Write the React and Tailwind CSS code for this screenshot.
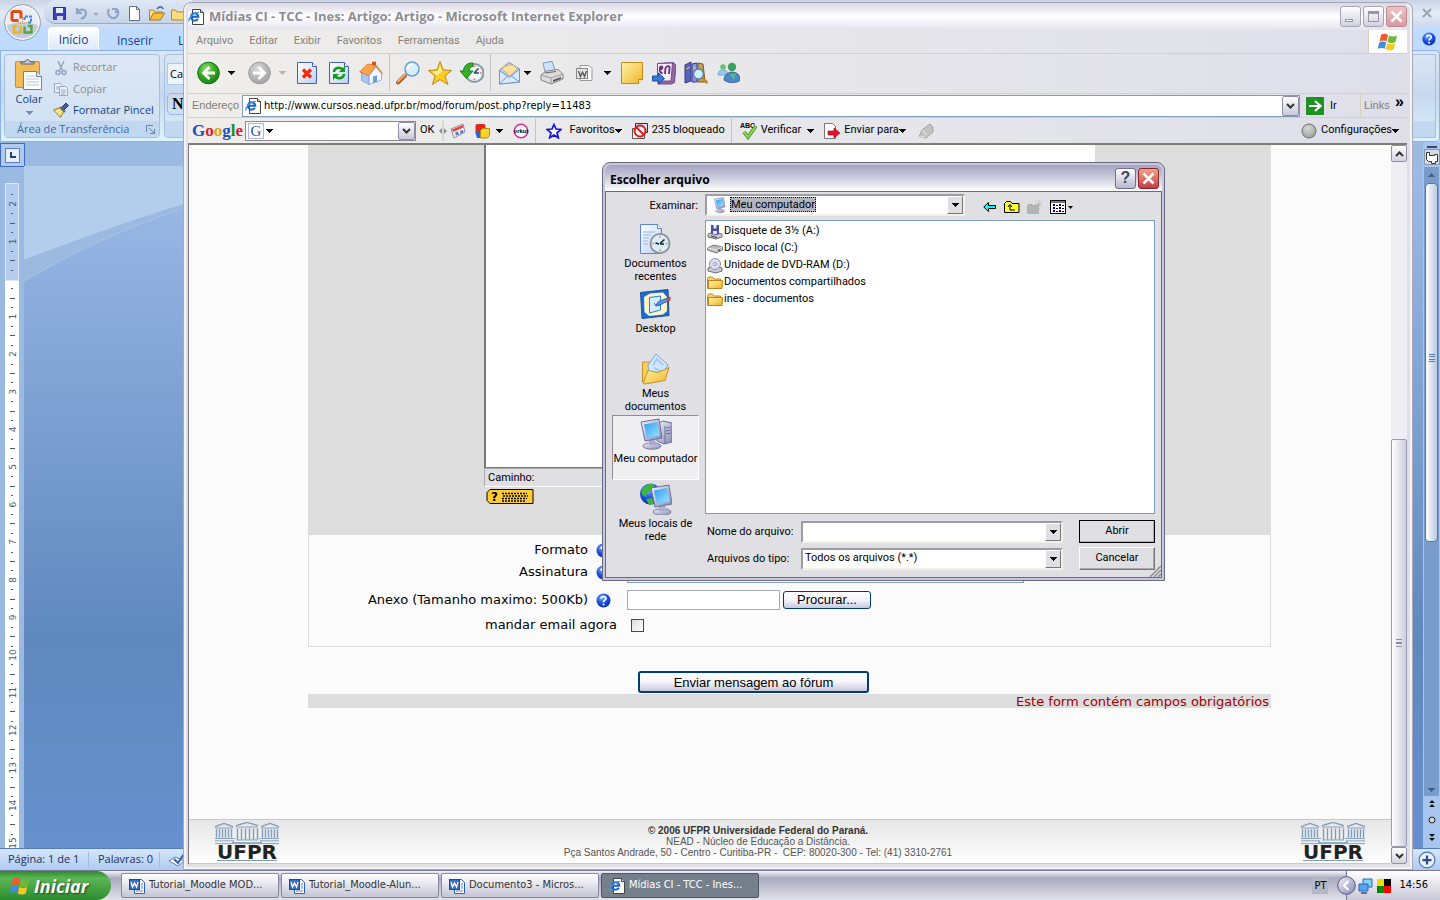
import React from 'react';

/* ---------- shared glyphs ---------- */

const Caret = ({ className = 'fill-black' }) => (
  <svg width="7" height="4" viewBox="0 0 7 4" className={`shrink-0 ${className}`} shapeRendering="crispEdges">
    <path d="M0 0h7v1H6v1H5v1H4v1H3V3H2V2H1V1H0z" />
  </svg>
);

const Defs = () => (
  <svg width="0" height="0" className="absolute" aria-hidden="true">
    <defs>
      <radialGradient id="green" cx="0.4" cy="0.3" r="0.8">
        <stop offset="0" stopColor="#8fe060" />
        <stop offset="0.5" stopColor="#35a924" />
        <stop offset="1" stopColor="#127a10" />
      </radialGradient>
      <radialGradient id="gray" cx="0.4" cy="0.3" r="0.8">
        <stop offset="0" stopColor="#d8d8d8" />
        <stop offset="1" stopColor="#9b9b9b" />
      </radialGradient>
      <radialGradient id="blue" cx="0.4" cy="0.3" r="0.8">
        <stop offset="0" stopColor="#7fb2ff" />
        <stop offset="0.5" stopColor="#1c50e0" />
        <stop offset="1" stopColor="#0526a0" />
      </radialGradient>
      <linearGradient id="paper" x1="0" y1="0" x2="1" y2="1">
        <stop offset="0" stopColor="#ffffff" />
        <stop offset="1" stopColor="#b9d0f5" />
      </linearGradient>
      <linearGradient id="gold" x1="0" y1="0" x2="1" y2="1">
        <stop offset="0" stopColor="#fff4a8" />
        <stop offset="1" stopColor="#f0b428" />
      </linearGradient>
      <linearGradient id="screen" x1="0" y1="0" x2="1" y2="1">
        <stop offset="0" stopColor="#2f9df0" />
        <stop offset="1" stopColor="#9be6ff" />
      </linearGradient>
      <linearGradient id="steel" x1="0" y1="0" x2="1" y2="1">
        <stop offset="0" stopColor="#f2f2fa" />
        <stop offset="1" stopColor="#8688b4" />
      </linearGradient>
    </defs>
  </svg>
);

const Flag = ({ size = 20 }) => (
  <svg width={size} height={size} viewBox="0 0 20 20">
    <path d="M3 3c3-2 5-1 7 0L8.500 9.500C6.500 8 4.500 8 1.500 9.500z" fill="#ef5a2b" />
    <path d="M11 3.500c2 1 5 1.500 8 0L17.500 10c-3 1.500-6 1-8 0z" fill="#6fb93a" />
    <path d="M1.200 10.500c3-1.500 5-1.500 7 0L6.700 17c-2-1.500-4-1.500-7 0z" fill="#3f8fe0" />
    <path d="M9.200 11c2 1 5 1.500 8 0l-1.500 6.500c-3 1.500-6 1-8 0z" fill="#fbc523" />
  </svg>
);

const IePage = ({ size = 16 }) => (
  <svg width={size} height={size} viewBox="0 0 16 16" className="shrink-0">
    <path d="M4.500.5h8l3 3v12h-11z" fill="#fffef2" stroke="#444" />
    <path d="M12.500.5v3h3" fill="#ddd" stroke="#444" />
    <path d="M9.800 9.800A3.700 3.700 0 1 1 10.300 7.800H4" fill="none" stroke="#1b62cf" strokeWidth="2" />
    <path d="M.8 12.500C0 9 6 3 11 3.500" fill="none" stroke="#3d9be8" strokeWidth="1.200" />
  </svg>
);

const WordPage = () => (
  <svg width="16" height="16" viewBox="0 0 16 16" className="shrink-0">
    <path d="M5.500 1.500h7l3 3v11h-10z" fill="#fff" stroke="#2f5fa8" />
    <path d="M12 6h2M12 8h2M12 10h2M7 13h7" stroke="#5b84c4" />
    <rect x=".5" y="1.500" width="10" height="10" fill="#3a6fc4" stroke="#1f4a94" />
    <path d="M2 4l1.500 5L5.500 5l2 4L9 4" fill="none" stroke="#fff" strokeWidth="1.300" />
  </svg>
);

const Folder = () => (
  <svg width="16" height="16" viewBox="0 0 16 16" className="shrink-0">
    <path d="M.5 3.500l1-1.500h4l1.500 2h6.500v9.500H.5z" fill="#f5d468" stroke="#c08a18" />
    <path d="M1.500 5.500h14l-.5 8H1.500z" fill="url(#gold)" stroke="#b8861a" />
  </svg>
);

const HelpBall = ({ size = 15 }) => (
  <svg width={size} height={size} viewBox="0 0 15 15" className="shrink-0">
    <circle cx="7.500" cy="7.500" r="7" fill="url(#blue)" />
    <path d="M5 5.700C5 2.800 10.200 2.800 10 5.700 9.900 7.200 7.600 7 7.600 9.200" fill="none" stroke="#fff" strokeWidth="1.700" />
    <circle cx="7.600" cy="11.500" r="1.100" fill="#fff" />
  </svg>
);

/* ---------- Word in the background ---------- */

const OfficeOrb = () => (
  <svg width="38" height="38" viewBox="0 0 38 38" className="absolute left-[4px] top-[4px]">
    <circle cx="18.500" cy="18.500" r="17.800" fill="#e9edf3" stroke="#8b99ac" />
    <path d="M2 22a17 17 0 0 0 33 0c-10-5-23-5-33 0z" fill="#c3ccda" />
    <circle cx="18.500" cy="18.500" r="16.500" fill="none" stroke="#fff" />
    <g fill="none">
      <path d="M17 14.500V9.200c0-1.200-.8-1.700-1.700-1.700H9.700C8.500 7.500 8 8.200 8 9.200v5.600c0 1 .8 1.700 1.700 1.700h4.800" stroke="#dd4f14" strokeWidth="3" />
      <path d="M20.500 16v-3.500h6.500v6h-3" stroke="#3b8ad8" strokeWidth="2" strokeDasharray="3 1" />
      <path d="M16.500 22v6.500H10v-6.500h3" stroke="#f0b21c" strokeWidth="2.600" />
      <path d="M20.500 22.500v6h7v-6.500H24" stroke="#57a639" strokeWidth="2.400" />
      <path d="M18.500 13v7M14 19h9" stroke="#e58a1c" strokeDasharray="1 1" />
    </g>
  </svg>
);

const QuickAccess = () => (
  <svg width="140" height="18" viewBox="0 0 140 18">
    <path d="M1.500 2.500h12v12h-12z" fill="#3c44b4" stroke="#28308c" />
    <path d="M4 3h7v5H4z" fill="#e8ecff" />
    <path d="M5 11h6v4H5z" fill="#cfd4ee" />
    <path d="M25 3v5h5M25 8c3-5 10-4 9 1-.5 3-3 4-5 5" fill="none" stroke="#8fa4c8" strokeWidth="2.200" />
    <path d="M41 8h6l-3 3z" fill="#a9a9b4" />
    <path d="M64 3v5M57 4c-4 8 7 13 9 5 .5-2 0-4-2-5h-4" fill="none" stroke="#8fa4c8" strokeWidth="2.200" />
    <path d="M77.500 1.500h7l3 3v11h-10z" fill="#fff" stroke="#5a6f8f" />
    <path d="M84.500 1.500v3h3" fill="none" stroke="#5a6f8f" />
    <path d="M97.500 15V5h4l1.500 2h7v2" fill="#ffe18a" stroke="#b9862a" />
    <path d="M97.500 15l4-7h11l-4 7z" fill="#f7bf3c" stroke="#a8741c" />
    <path d="M105 4c2-3 5-3 6 0" fill="none" stroke="#2d60ad" strokeWidth="1.500" />
    <path d="M119.500 15V5h4l1.500 2h14v8z" fill="#ffdb7c" stroke="#b9862a" />
  </svg>
);

const PasteIcon = () => (
  <svg width="28" height="32" viewBox="0 0 28 32">
    <rect x=".5" y="2.500" width="24" height="26" rx="1" fill="#f0bb59" stroke="#c58a2c" />
    <path d="M6 5h13V3h-4c0-3-5-3-5 0H6z" fill="#ccd2dc" stroke="#59616e" />
    <path d="M8.500 12.500h13l5 5v13h-18z" fill="#fff" stroke="#6d7f9c" />
    <path d="M21.500 12.500v5h5" fill="#dfe7f4" stroke="#6d7f9c" />
    <path d="M11 17h9M11 20h13M11 23h13M11 26h13" stroke="#b8c4d8" />
  </svg>
);

const ScissorsIcon = () => (
  <svg width="16" height="16" viewBox="0 0 16 16" fill="none" stroke="#92a3be" strokeWidth="1.500">
    <path d="M5 1l4.500 9.500M11 1L6.500 10.500" />
    <circle cx="5" cy="12.500" r="2" />
    <circle cx="11" cy="12.500" r="2" />
  </svg>
);

const CopyIcon = () => (
  <svg width="16" height="16" viewBox="0 0 16 16" fill="#eef2f9" stroke="#93a6c6">
    <path d="M1.500 2.500h6l2 2v7h-8z" />
    <path d="M3 6h4M3 8h4" />
    <path d="M6.500 5.500h6l2 2v7h-8z" />
    <path d="M8 9h5M8 11h5M8 13h4" />
  </svg>
);

const BrushIcon = () => (
  <svg width="16" height="16" viewBox="0 0 16 16">
    <path d="M8 6l5-5 2.500 2.500-5 5z" fill="#4a5a9e" stroke="#27356f" />
    <path d="M.5 8l7-2.500L11 9l-3.500 6.500z" fill="#f5dc72" stroke="#9b7a1e" />
    <path d="M3 10l4-2M5 12.500l3-3" stroke="#fff6c8" />
    <path d="M7 5l5 5" stroke="#666" strokeWidth="2" />
  </svg>
);

const UNIT = 37.6;

const VerticalRuler = () => {
  const marks = [];
  for (let q = -9; q <= 60; q += 1) {
    const y = 96 + (q * UNIT) / 4;
    if (q === 0) continue;
    if (q % 4 === 0) {
      marks.push(
        <text key={q} transform={`translate(11 ${y}) rotate(-90)`} textAnchor="middle" fontSize="9" fill="#4c5a75" className="font-['DejaVu_Sans']">
          {Math.abs(q / 4)}
        </text>
      );
    } else {
      marks.push(<rect key={q} x={q % 2 === 0 ? 5 : 6} y={Math.round(y)} width={q % 2 === 0 ? 5 : 2} height="1" fill="#4c5a75" />);
    }
  }
  return (
    <svg width="14" height="665" viewBox="0 0 14 665" className="mt-4 ml-[5px] block">
      <rect width="14" height="665" fill="#fff" />
      <rect x=".5" y=".5" width="13" height="97" fill="#b4ccee" stroke="#dce8f8" />
      {marks}
    </svg>
  );
};

const WordWindow = () => (
  <div className="absolute inset-0 flex flex-col overflow-hidden bg-[#bfdbff] font-['Open_Sans',sans-serif] text-xs text-[#15428b]">
    <div className="flex h-7 items-start justify-between bg-gradient-to-b from-[#c9d5e6] via-[#e4ebf6] to-[#cad9ee]">
      <div className="ml-11 flex h-6 items-center rounded-l-xl border-b border-[#8fa9cf] bg-gradient-to-b from-[#dfe7f3] to-[#c6d4ea] pt-1 pl-2">
        <QuickAccess />
      </div>
      <button type="button" aria-label="Fechar documento" className="pt-1 pr-2">
        <svg width="10" height="18" viewBox="0 0 10 18">
          <path d="M1 5l8 8M9 5l-8 8" stroke="#98a3b3" strokeWidth="2" />
        </svg>
      </button>
    </div>
    <div className="flex h-[23px] items-end justify-between pr-1">
      <div className="flex h-full items-center pl-12">
        <button type="button" className="h-full w-[51px] rounded-t border border-b-0 border-white bg-gradient-to-b from-white to-[#dce9f9] pt-0.5">Início</button>
        <button type="button" className="ml-[18px] pt-1">Inserir</button>
        <button type="button" className="ml-[25px] pt-1">L</button>
      </div>
      <span className="pb-1"><HelpBall size={14} /></span>
    </div>
    <div className="flex h-[92px] gap-1 rounded-r border border-[#8db2e3] bg-gradient-to-b from-[#dbe7f6] via-[#c7d8ed] to-[#dcf3ff] p-[3px]">
      <div className="flex w-[156px] shrink-0 flex-col rounded border border-[#a6c0e2] bg-gradient-to-b from-[#dde8f5] to-[#cfe0f3]">
        <div className="flex h-[66px] pt-0.5">
          <button type="button" className="flex w-12 flex-col items-center pt-0.5 text-[11px] leading-4">
            <PasteIcon />
            Colar
            <Caret className="mt-1 fill-[#6f8ec2]" />
          </button>
          <div className="flex flex-col text-[11px]">
            <button type="button" className="flex h-[22px] items-center gap-1 text-[#8d8d8d]"><ScissorsIcon />Recortar</button>
            <button type="button" className="flex h-[22px] items-center gap-1 text-[#8d8d8d]"><CopyIcon />Copiar</button>
            <button type="button" className="flex h-[22px] items-center gap-1"><BrushIcon />Formatar Pincel</button>
          </div>
        </div>
        <div className="flex h-4 shrink-0 items-center justify-between bg-[#c2d8f1] pr-1 pl-3 text-[11px] leading-4 text-[#3e6aaa]">
          Área de Transferência
          <svg width="9" height="9" viewBox="0 0 9 9" fill="none" stroke="#5f84ba">
            <path d="M7 .5H.5V7M3 3l5 5M8.500 4v4.500H4" />
          </svg>
        </div>
      </div>
      <div className="flex grow flex-col overflow-hidden rounded-l border border-[#a6c0e2]">
        <div className="mt-2 ml-0.5 h-[22px] w-[120px] border border-[#b0c6e4] bg-[#eef4fc] px-0.5 text-[11px] leading-5 text-black">Ca</div>
        <div className="mt-2 ml-0.5 h-[22px] w-[120px] rounded border border-[#9db8dc] px-1 font-['Liberation_Serif',serif] text-base leading-5 font-bold text-black">N</div>
        <div className="mt-auto h-4 bg-[#c2d8f1]" />
      </div>
    </div>
    <div className="flex grow bg-[#9bbae2]">
      <div className="flex w-6 flex-col">
        <div className="mt-px flex h-6 w-[25px] shrink-0 items-center justify-center border border-[#3c6ac6] bg-[#b1caec]">
          <div className="flex h-[15px] w-[15px] items-center justify-center border border-[#5a80c8] bg-[#e6effa]">
            <span className="h-[6px] w-[6px] border-b-2 border-l-2 border-[#24436f]" />
          </div>
        </div>
        <VerticalRuler />
      </div>
      <div className="mt-6 grow overflow-hidden bg-gradient-to-b from-[#9dbbe8] via-[#5f88bd] via-70% to-[#6691cd]">
        <svg width="160" height="120" viewBox="0 0 160 120">
          <path d="M0 0h160v38C100 57 50 75 0 94z" fill="#b3cdec" />
          <path d="M160 38C100 57 50 75 0 94v21c50-29 100-53 160-74z" fill="#9cb9e0" />
          <path d="M0 115C50 86 100 62 160 42" fill="none" stroke="#a8c4ea" />
        </svg>
      </div>
      <div className="flex w-[17px] flex-col items-center bg-[#a7c5ee] pt-1">
        <span className="mb-px h-0.5 w-2.5 bg-[#34486c]" />
        <span className="flex h-4 w-4 items-center justify-center border border-[#8b98ac] bg-[#d3d9e2]">
          <svg width="14" height="13" viewBox="0 0 14 13" fill="#fff" stroke="#333">
            <path d="M1.500 1.500h3v3h5v-1h3v7h-2v2h-4v-2h-3l-2-2z" />
          </svg>
        </span>
        <div className="mt-0.5 flex w-[15px] grow flex-col items-center bg-[#7a9ccb] pb-1">
          <span className="flex h-4 items-center"><Caret className="rotate-180 fill-[#4b618a]" /></span>
          <div className="h-[359px] w-[13px] rounded border border-[#5878a8] bg-gradient-to-r from-white to-[#b9c9e0] pt-[170px]">
            <div className="mx-auto h-2 w-1.5 border-y-3 border-double border-[#5878a8]" />
          </div>
          <span className="mt-auto"><Caret className="fill-[#3f5d92]" /></span>
        </div>
        <svg width="12" height="52" viewBox="0 0 12 52" fill="#111">
          <path d="M6 4l3 3H3zM6 8l3 3H3zM6 45l3-3H3zM6 41l3-3H3z" />
          <circle cx="6" cy="24" r="3" fill="#d6d6d6" stroke="#222" />
        </svg>
      </div>
    </div>
    <div className="flex h-[22px] shrink-0 items-center border-t border-[#4f7cc4] bg-gradient-to-b from-[#d7e6f9] to-[#aecbf3] text-[11px] text-[#15305c]">
      <span className="w-[89px] border-r border-[#9dbbe5] pl-2">Página: 1 de 1</span>
      <span className="w-[71px] border-r border-[#9dbbe5] pl-[9px]">Palavras: 0</span>
      <svg width="18" height="16" viewBox="0 0 18 16" className="ml-2">
        <path d="M1 9l6-4 9 4-6 5z" fill="#fff" stroke="#5f7cae" />
        <path d="M6 7l4 4 6-9" fill="none" stroke="#2f5fb4" strokeWidth="2" />
      </svg>
      <svg width="18" height="18" viewBox="0 0 16 16" className="mr-1 ml-auto">
        <circle cx="8" cy="8" r="7" fill="#e8f0fb" stroke="#4c72ac" />
        <path d="M8 4v8M4 8h8" stroke="#31507f" strokeWidth="2" />
      </svg>
    </div>
  </div>
);

/* ---------- Internet Explorer toolbar icons ---------- */

const Ico = ({ children, size = 24, label }) => (
  <button type="button" aria-label={label} className="shrink-0">
    <svg width={size} height={size} viewBox="0 0 24 24">{children}</svg>
  </button>
);

const BackIcon = () => (
  <Ico label="Voltar">
    <circle cx="12.500" cy="12" r="10.800" fill="url(#green)" stroke="#0f6d10" />
    <path d="M19 12H8M13.500 6l-6 6 6 6" fill="none" stroke="#fff" strokeWidth="2.800" />
  </Ico>
);
const ForwardIcon = () => (
  <Ico label="Avançar">
    <circle cx="12.500" cy="12" r="10.800" fill="url(#gray)" stroke="#989898" />
    <path d="M6 12h11M11.500 6l6 6-6 6" fill="none" stroke="#fff" strokeWidth="2.800" />
  </Ico>
);
const StopIcon = () => (
  <Ico label="Parar">
    <path d="M2.500 1.500h15l4 4v17h-19z" fill="url(#paper)" stroke="#4461b5" />
    <path d="M17.500 1.500v4h4" fill="#fff" stroke="#4461b5" />
    <path d="M8 8.500l8 8M16 8.500l-8 8" stroke="#f02a08" strokeWidth="3.200" />
  </Ico>
);
const RefreshIcon = () => (
  <Ico label="Atualizar">
    <path d="M2.500 1.500h15l4 4v17h-19z" fill="url(#paper)" stroke="#4461b5" />
    <path d="M17.500 1.500v4h4" fill="#fff" stroke="#4461b5" />
    <path d="M7 11c0-4 6-6 9-2" fill="none" stroke="#149a1a" strokeWidth="2.500" />
    <path d="M18 5v6h-6z" fill="#149a1a" />
    <path d="M17 13c0 4-6 6-9 2" fill="none" stroke="#149a1a" strokeWidth="2.500" />
    <path d="M6 19v-6h6z" fill="#149a1a" />
  </Ico>
);
const HomeIcon = () => (
  <Ico label="Página inicial">
    <path d="M2.500 10.500L10 15v8.500l-7.500-4z" fill="#a8c6f0" stroke="#7f9fd0" strokeWidth=".8" />
    <path d="M10 15l7-9 5.500 6.500V19L10 23.500z" fill="#f2f7ff" stroke="#7f9fd0" strokeWidth=".8" />
    <path d="M.5 11L8.500 3 17 4.500 9.500 14.500z" fill="#f9a24a" stroke="#d07a28" strokeWidth=".8" />
    <path d="M17 4.500l6.500 8.500" stroke="#d88a48" strokeWidth="1.500" />
    <path d="M13 .8h4v4l-4-1z" fill="#d4512a" />
    <path d="M14 15.500l4-1.300v6.500l-4 1.300z" fill="#6f9be0" />
  </Ico>
);
const SearchIcon = () => (
  <Ico label="Pesquisar">
    <path d="M9 14.500l-7 7" stroke="#a85f2c" strokeWidth="4" strokeLinecap="round" />
    <path d="M9 13.500l-7 7" stroke="#f2a870" strokeWidth="2" strokeLinecap="round" />
    <circle cx="16" cy="8" r="7" fill="#d8f0fd" stroke="#6b9cdc" strokeWidth="1.500" />
    <path d="M11.500 8a5 5 0 0 1 5-4.500" fill="none" stroke="#fff" strokeWidth="2" />
  </Ico>
);
const StarIcon = () => (
  <Ico label="Favoritos">
    <path d="M12 .5l3.200 8.300 8.300.7-6.500 5.500 3 8.500L12 18.500 4.500 23.500 7 15 .5 9.500 9 8.800z" fill="#ffcc22" stroke="#c08414" />
    <path d="M12 4l2 6.500-5 4-5-4 6-.5z" fill="#fff3a0" />
  </Ico>
);
const HistoryIcon = () => (
  <Ico label="Histórico">
    <circle cx="14.500" cy="12" r="9" fill="#d5ecfb" stroke="#8d979f" strokeWidth="2" />
    <circle cx="14.500" cy="12" r="6.500" fill="#f2fafe" />
    <path d="M14 12l4.500-4.500M14 12h5" stroke="#2c4a70" strokeWidth="1.600" />
    <path d="M14.500 17.500v1.500M20 12h1.500M14.500 5v1" stroke="#f06a3a" strokeWidth="1.500" />
    <path d="M13 2C7 1.500 3.500 5.500 3.500 10H0l6.500 7.500L13 10H9C9 7.500 10.500 5.500 13 5.500z" fill="#35b02c" stroke="#1a7a18" />
  </Ico>
);
const MailIcon = () => (
  <Ico label="Correio">
    <path d="M1.500 9L11 1.500 21.500 8v13l-20 2z" fill="#bcd6f6" stroke="#6f92c8" />
    <path d="M4 8c4-5 12-6 15 0l-7 7z" fill="#ffe0a0" stroke="#e0b060" />
    <path d="M1.500 9.500l10 7 10-8.500v13l-20 2z" fill="#d8ebfe" stroke="#6f92c8" />
    <path d="M1.500 23l8-8M21.500 21l-8-6" stroke="#6f92c8" />
  </Ico>
);
const PrintIcon = () => (
  <Ico label="Imprimir">
    <path d="M5 11L3 2l9-1.500 3 9z" fill="#cfe4fb" stroke="#7b96c0" />
    <path d="M1 14l5-4 12-1.500 5 4.500v5l-12 5-10-4z" fill="#dcdcdc" stroke="#858585" />
    <path d="M1 14l10 3 12-4M11 17v6" fill="none" stroke="#9a9a9a" />
    <path d="M13 19l8-3v2l-8 3z" fill="#555" />
    <path d="M5 12l11-1.500" stroke="#666" />
  </Ico>
);
const EditWordIcon = () => (
  <Ico label="Editar">
    <path d="M8 4.500h9l3 3v12H8z" fill="#f8f8f8" stroke="#999" />
    <rect x="4.500" y="7.500" width="11" height="10" fill="#e4e4e4" stroke="#888" />
    <path d="M6.500 10l2 5.500 2-4.500 2 4.500 2-5.500" fill="none" stroke="#555" strokeWidth="1.300" />
  </Ico>
);
const StickyIcon = () => (
  <Ico label="Nota">
    <path d="M1.500 1.500h21v17l-4 4h-17z" fill="url(#gold)" stroke="#bd8b16" />
    <path d="M22.500 18.500h-4v4" fill="#fff6c0" stroke="#bd8b16" />
  </Ico>
);
const OneNoteIcon = () => (
  <Ico label="OneNote">
    <path d="M6 2.500L21.500 1.500 24 4l-1.500 17.500-3 1.500H6z" fill="#8d6aa0" stroke="#77488c" />
    <path d="M5.500 2.500l15-.5-1.500 18H5.500z" fill="#f4edf8" stroke="#77488c" />
    <path d="M7 9c3 .5 4.500-3.500 2.500-3.500S6.500 12 10.500 12M13 13l.5-6c2-3 4.500-2 4 .5l-.5 5.500" fill="none" stroke="#6d2a80" strokeWidth="1.800" />
    <path d="M.5 15h6v-3l6 5.500-6 5.500v-3h-6z" fill="#3a78d8" stroke="#1f4d9c" />
  </Ico>
);
const BooksIcon = () => (
  <Ico label="Pesquisar livros">
    <path d="M1 4l6-3v19l-6 2z" fill="#5a63b8" stroke="#343a80" />
    <path d="M8 3l5-1v19H8z" fill="#8c94dc" stroke="#343a80" />
    <path d="M14 2l5 1 2 18h-7z" fill="#c6a05c" stroke="#7a5a20" />
    <path d="M2 8l4-2M9 7h3M9 16h3" stroke="#e8d070" />
    <circle cx="14.500" cy="13" r="5" fill="#d2ecfb" stroke="#5c7fae" strokeWidth="1.500" />
    <path d="M18.500 17l5 5" stroke="#b98a1c" strokeWidth="2.500" />
  </Ico>
);
const PeopleIcon = () => (
  <Ico label="Messenger">
    <circle cx="7" cy="6" r="2.800" fill="#6cc072" />
    <path d="M2 14c0-7 10-7 10 0z" fill="#9cc8ea" stroke="#6aa0c8" strokeWidth=".8" />
    <circle cx="16" cy="6" r="4.200" fill="#3f9f58" />
    <path d="M8 19c0-10 16-11 16.500 0-4 3.500-12 3.500-16.500 0z" fill="#4a88c8" stroke="#2a5a90" strokeWidth=".8" />
    <path d="M13 11.500c2 2 5 2 7 0l-2 8z" fill="#5fb890" />
  </Ico>
);

const Sep = () => <span className="mx-1.5 h-full w-px shrink-0 bg-[#c3c2ca]" />;

const Toolbar = () => (
  <div className="flex h-10 shrink-0 items-center border-b border-[#d8d0b8] pb-0.5 pl-2">
    <div className="flex items-center gap-2">
      <BackIcon />
      <span className="w-[11px]"><Caret /></span>
      <ForwardIcon />
      <span className="w-2"><Caret className="fill-[#b5b5b5]" /></span>
      <StopIcon />
      <RefreshIcon />
      <HomeIcon />
    </div>
    <Sep />
    <div className="flex items-center gap-2">
      <SearchIcon />
      <StarIcon />
      <HistoryIcon />
    </div>
    <Sep />
    <div className="ml-px flex items-center gap-2">
      <div className="flex items-center">
        <MailIcon />
        <span className="w-2.5 pl-0.5"><Caret /></span>
      </div>
      <PrintIcon />
      <EditWordIcon />
      <span className="w-2"><Caret /></span>
      <StickyIcon />
      <OneNoteIcon />
      <BooksIcon />
      <PeopleIcon />
    </div>
  </div>
);

const LunaArrow = () => (
  <span className="flex h-full w-[17px] shrink-0 items-center justify-center rounded-xs border border-[#8f90a8] bg-gradient-to-b from-white to-[#c9c8da]">
    <svg width="9" height="6" viewBox="0 0 9 6"><path d="M1 1l3.500 3.500L8 1" fill="none" stroke="#333" strokeWidth="2" /></svg>
  </span>
);

const AddressBar = () => (
  <div className="flex h-6 shrink-0 items-center border-b border-[#d8d0b8] pl-1 text-[11px]">
    <label htmlFor="address" className="w-[50px] text-[#7f7d78]">Endereço</label>
    <div className="flex h-[22px] grow items-center border border-[#7f9db9] bg-white pl-0.5">
      <IePage />
      <input
        id="address"
        defaultValue="http://www.cursos.nead.ufpr.br/mod/forum/post.php?reply=11483"
        className="h-full grow px-[3px] font-['DejaVu_Sans_Condensed','DejaVu_Sans',sans-serif] text-[11px] outline-none"
      />
      <LunaArrow />
    </div>
    <button type="button" className="ml-1.5 flex w-[54px] items-center gap-1.5">
      <svg width="18" height="18" viewBox="0 0 18 18">
        <rect width="18" height="18" rx="1" fill="#1d9222" />
        <path d="M3 9h11M9 4l5.500 5L9 14" fill="none" stroke="#fff" strokeWidth="2.200" />
      </svg>
      Ir
    </button>
    <div className="flex h-full w-[47px] items-center justify-between border-l border-[#d8d0b8] px-[3px] text-[#7f7d78]">
      Links
      <span className="pb-2 text-base leading-3 font-bold text-black">»</span>
    </div>
  </div>
);

const GoogleBar = () => (
  <div className="flex h-[27px] shrink-0 items-center border-b-2 border-[#807c78] pr-2 pl-1 font-['Roboto',sans-serif] text-[11px]">
    <span className="w-[53px] font-['Liberation_Serif',serif] text-[17px] leading-5 font-bold">
      <span className="text-[#1b4fc4]">G</span>
      <span className="text-[#d2202a]">o</span>
      <span className="text-[#dba514]">o</span>
      <span className="text-[#1b4fc4]">g</span>
      <span className="text-[#178a2c]">l</span>
      <span className="text-[#d2202a]">e</span>
    </span>
    <div className="flex h-5 w-[171px] items-center border border-[#8a8a94] bg-white pl-0.5">
      <span className="flex h-4 w-4 items-center justify-center border border-[#a9b8e8] font-['Liberation_Serif',serif] text-[15px] leading-4 text-[#2a50c0]">G</span>
      <Caret className="ml-0.5 fill-black" />
      <input aria-label="Pesquisa Google" className="w-10 grow outline-none" />
      <LunaArrow />
    </div>
    <button type="button" className="ml-1">OK</button>
    <svg width="10" height="20" viewBox="0 0 10 20" className="mr-0.5 ml-1">
      <path d="M5 0v20" stroke="#c3c2ca" />
      <path d="M4 7v6l-3-3zM6 7v6l3-3z" fill="#8c8c90" />
    </svg>
    <svg width="16" height="16" viewBox="0 0 16 16" className="mr-2">
      <path d="M1 6l12-5 2 8-11 6z" fill="#f7f1ee" stroke="#8e8e9a" />
      <path d="M2 6.500l11-4.500.5 2.500L3 9z" fill="#e04848" />
      <path d="M5 9.500l3-1 1 3-3 1zM10 8l3-1 .5 2.500-3 1.500z" fill="#5578c8" />
    </svg>
    <svg width="16" height="16" viewBox="0 0 16 16" className="mr-1.5">
      <rect x="1.500" y="1" width="10" height="8" rx="2" fill="#e02818" />
      <path d="M1 8h7v7H3z" fill="#2a62d8" />
      <path d="M6.500 7.500l2-2h7v7l-2 2.500h-7z" fill="#fbd22a" stroke="#b08a10" />
    </svg>
    <Caret />
    <svg width="16" height="16" viewBox="0 0 16 16" className="ml-2.5 overflow-visible">
      <circle cx="8" cy="8" r="6.700" fill="#fff" stroke="#d8289a" strokeWidth="1.500" />
      <text x="8" y="10" textAnchor="middle" fontSize="6" fontWeight="bold" className="font-['Liberation_Sans']">orkut</text>
    </svg>
    <Sep />
    <button type="button" className="ml-1 flex items-center gap-[7px]">
      <svg width="16" height="16" viewBox="0 0 16 16">
        <path d="M8 1.500l2 4.500 5 .5-4 3.300 1.300 5L8 12l-4.300 2.800 1.300-5L1 6.500 6 6z" fill="#fff" stroke="#1414e0" strokeWidth="1.700" />
      </svg>
      <span className="flex items-center">Favoritos<Caret /></span>
    </button>
    <button type="button" className="ml-2.5 flex items-center gap-1">
      <svg width="16" height="16" viewBox="0 0 16 16">
        <path d="M3.500.5h12v9h-12z" fill="#cfe0f8" stroke="#333" />
        <path d="M.5 5.500h12v10H.5z" fill="#f4f4f4" stroke="#555" />
        <circle cx="8" cy="8" r="5.500" fill="#fff" stroke="#e01818" strokeWidth="2" />
        <path d="M4 4l8 8" stroke="#e01818" strokeWidth="2" />
      </svg>
      235 bloqueado
    </button>
    <Sep />
    <button type="button" className="ml-0.5 flex items-center gap-1">
      <svg width="17" height="18" viewBox="0 0 17 18">
        <text x="0" y="6" fontSize="7" fontWeight="bold" className="font-['Liberation_Sans']">ABC</text>
        <path d="M4 10l4 5 8-11" fill="none" stroke="#3c7a20" strokeWidth="3.500" />
        <path d="M4 10l4 5 8-11" fill="none" stroke="#8ee04c" strokeWidth="2" />
      </svg>
      Verificar
    </button>
    <span className="ml-1.5"><Caret /></span>
    <button type="button" className="ml-2.5 flex items-center gap-1">
      <svg width="16" height="16" viewBox="0 0 16 16">
        <path d="M.5.5h8l3 3v12H.5z" fill="#fff" stroke="#777" />
        <path d="M4 8h6V5l6 5-6 5v-3H4z" fill="#e8102a" stroke="#8a0a18" strokeWidth=".6" />
      </svg>
      <span className="flex items-center">Enviar para<Caret /></span>
    </button>
    <svg width="16" height="16" viewBox="0 0 16 16" className="ml-3">
      <path d="M1 14l3-7 8-6 3 3v5l-7 6z" fill="#c2c2c2" stroke="#a2a2a2" />
      <path d="M4 7l5 5M1 14h6" stroke="#eee" />
    </svg>
    <button type="button" className="ml-auto flex items-center gap-1">
      <svg width="16" height="16" viewBox="0 0 16 16"><circle cx="8" cy="8" r="7" fill="url(#gray)" stroke="#6d6d6d" /></svg>
      <span className="flex items-center">Configurações<Caret /></span>
    </button>
  </div>
);

/* ---------- forum page ---------- */

const UfprLogo = () => (
  <div className="flex w-16 flex-col items-center">
    <svg width="66" height="23" viewBox="0 0 66 25" preserveAspectRatio="none" fill="none" stroke="#7d9cbc">
      <path d="M1 5l9-3.500L19 5M22 4l11-3.500L44 4M47 5l9-3.500L65 5" strokeWidth="1.500" />
      <path d="M1 6.500h18M47 6.500h18M22 5.500h22" />
      <path d="M2.500 8v9M5.500 8v9M8.500 8v9M11.500 8v9M14.500 8v9M17.500 8v9M48.500 8v9M51.500 8v9M54.500 8v9M57.500 8v9M60.500 8v9M63.500 8v9M23.500 7v12M27.500 7v12M31.500 7v12M35.500 7v12M39.500 7v12M43.500 7v12" strokeWidth="1.400" />
      <path d="M1 18h20M45 18h20M22 19.500h22M1 20.500h19l-2 2h30l-2-2h19M1 23.500h64" />
    </svg>
    <span className="border-b border-[#7d9cbc] font-['DejaVu_Sans',sans-serif] text-xl leading-[15px] font-bold text-[#222]">UFPR</span>
  </div>
);

const FormRow = ({ label, htmlFor, help, className = '', children }) => (
  <div className={`flex items-center ${className}`}>
    <div className="flex w-[308px] shrink-0 items-center justify-end">
      <label htmlFor={htmlFor}>{label}</label>
      {help && <a href="#ajuda" aria-label={`Ajuda: ${label}`} className="mr-1.5 ml-2"><HelpBall /></a>}
    </div>
    <div className="flex items-center pl-2.5">{children}</div>
  </div>
);

const xpButton = 'rounded-[3px] border border-[#003c74] bg-gradient-to-b from-white via-[#f4f4fa] to-[#c9c8dc] font-["Liberation_Sans",sans-serif] text-[13px]';

const ForumPage = () => (
  <div className="flex grow flex-col overflow-hidden bg-[#fbfbfb] font-['DejaVu_Sans',sans-serif] text-[13px] text-black">
    <main className="mr-[120px] ml-[119px] grow">
      <div className="flex h-[390px] flex-col bg-[#dddddd] pl-44">
        <textarea aria-label="Mensagem" className="h-[323px] w-[611px] resize-none border-b border-l-2 border-[#77777c] bg-white" />
        <div className="h-[19px] w-[611px] border-t border-b border-l border-[#aaa] border-b-white bg-[#e0dfe3] pl-[3px] font-['Roboto',sans-serif] text-[11px] leading-[18px]">Caminho:</div>
        <svg width="50" height="18" viewBox="0 0 50 18" className="mt-px">
          <path d="M6 1.500h43v14H6l-3-3V4.500z" fill="#fc3" stroke="#000" />
          <text x="7" y="13" fontSize="12" fontWeight="bold" className="font-['DejaVu_Sans']">?</text>
          <path d="M18 5.500h25M19 8h25M18 10.500h25M18 13h24" stroke="#000" strokeWidth="1.600" strokeDasharray="2 1" />
        </svg>
      </div>
      <form className="flex h-28 flex-col border border-t-0 border-[#ddd] pt-1">
        <FormRow label="Formato" help className="h-[22px]" />
        <FormRow label="Assinatura" htmlFor="assinatura" help className="h-[22px]">
          <select id="assinatura" className="h-[22px] w-[397px] appearance-none border border-[#7f9db9] bg-white" />
        </FormRow>
        <FormRow label="Anexo (Tamanho maximo: 500Kb)" htmlFor="anexo" help className="mt-1.5 h-[22px]">
          <input id="anexo" className="h-5 w-[153px] border border-[#a5acb2] bg-white" />
          <button type="button" className={`${xpButton} ml-[3px] h-[18px] w-[88px] leading-4`}>Procurar...</button>
        </FormRow>
        <FormRow label="mandar email agora" htmlFor="email" className="mt-0.5 h-6">
          <input id="email" type="checkbox" className="ml-1 size-[13px] appearance-none border border-[#1d5281] bg-gradient-to-br from-[#dcdcd7] to-white" />
        </FormRow>
      </form>
      <div className="mt-6 flex pl-[330px]">
        <button type="submit" className={`${xpButton} h-[22px] w-[231px] border-2`}>Enviar mensagem ao fórum</button>
      </div>
      <p className="mt-px h-3.5 bg-[#dddddd] pr-0.5 text-right leading-[15px] text-[#a00000]">Este form contém campos obrigatórios</p>
    </main>
    <footer className="flex h-[45px] items-center justify-between border-t border-b border-[#c9c9c9] bg-gradient-to-b from-[#e6e6e6] to-white px-[26px]">
      <UfprLogo />
      <p className="pr-16 text-center font-['Liberation_Sans_Narrow','Liberation_Sans',sans-serif] text-[10px] leading-[11px] text-[#555]">
        <b className="text-[#333]">© 2006 UFPR Universidade Federal do Paraná.</b>
        <br />
        NEAD - Núcleo de Educação a Distância.
        <br />
        Pça Santos Andrade, 50 - Centro - Curitiba-PR - &nbsp;CEP: 80020-300 - Tel: (41) 3310-2761
      </p>
      <UfprLogo />
    </footer>
  </div>
);

const menus = ['Arquivo', 'Editar', 'Exibir', 'Favoritos', 'Ferramentas', 'Ajuda'];

const ScrollArrow = ({ up }) => (
  <button type="button" aria-label={up ? 'Rolar para cima' : 'Rolar para baixo'} className="flex h-[17px] w-full shrink-0 items-center justify-center rounded-xs border border-[#8f90a8] bg-gradient-to-b from-white to-[#d4d3e0]">
    <svg width="9" height="6" viewBox="0 0 9 6" className={up ? 'rotate-180' : ''}>
      <path d="M1 1l3.500 3.500L8 1" fill="none" stroke="#333" strokeWidth="2" />
    </svg>
  </button>
);

const BrowserWindow = () => (
  <div className="absolute top-[2px] right-[27px] bottom-0 left-[183px] flex flex-col rounded-t-lg border border-[#a9a8b8] bg-[#e0dfe3] pr-[5px] pb-[5px] pl-1 font-['Liberation_Sans',sans-serif] text-black shadow-[inset_0_0_0_2px_#f4f4f8]">
    <div className="flex h-[27px] shrink-0 items-center bg-gradient-to-b from-[#d9d8e4] via-white to-[#e4e3ee]">
      <IePage />
      <h1 className="grow pl-[5px] font-['Open_Sans',sans-serif] text-[13px] font-bold text-[#8d8c92]">Mídias CI - TCC - Ines: Artigo: Artigo - Microsoft Internet Explorer</h1>
      <div className="flex gap-0.5">
        <button type="button" aria-label="Minimizar" className="flex size-[21px] items-end rounded-[3px] border border-[#a4a3b6] bg-gradient-to-b from-white to-[#d2d1de] p-1">
          <span className="h-[3px] w-2 border border-[#9796a8] bg-white" />
        </button>
        <button type="button" aria-label="Maximizar" className="flex size-[21px] items-center justify-center rounded-[3px] border border-[#a4a3b6] bg-gradient-to-b from-white to-[#d2d1de]">
          <span className="size-[11px] border border-t-[3px] border-[#9796a8]" />
        </button>
        <button type="button" aria-label="Fechar" className="flex size-[21px] items-center justify-center rounded-[3px] border border-[#b98a92] bg-gradient-to-b from-[#ecc4c4] to-[#d99a9e]">
          <svg width="13" height="13" viewBox="0 0 13 13"><path d="M1.500 1.500l10 10M11.500 1.500l-10 10" stroke="#fff" strokeWidth="2.500" /></svg>
        </button>
      </div>
    </div>
    <div className="flex min-h-0 grow flex-col bg-gradient-to-r from-[#efeeea] to-[#dfdfea]">
      <nav className="flex h-6 shrink-0 items-center justify-between border-b border-[#d8d0b8] pl-2 font-['Roboto',sans-serif] text-[11px] text-[#84827c]">
        <div className="flex gap-4">
          {menus.map((name) => (
            <button key={name} type="button">{name}</button>
          ))}
        </div>
        <span className="flex h-full w-[39px] items-center justify-center border-l border-[#d8d0b8] bg-white"><Flag /></span>
      </nav>
      <Toolbar />
      <AddressBar />
      <GoogleBar />
      <div className="flex min-h-0 grow border-l border-[#77777c]">
        <ForumPage />
        <div className="flex w-4 shrink-0 flex-col bg-[#eeeef4]">
          <ScrollArrow up />
          <div className="mt-[277px] flex h-[408px] items-center justify-center rounded-xs border border-[#9c9bb4] bg-gradient-to-r from-white to-[#cfcedd]">
            <span className="h-2 w-1.5 border-y-4 border-double border-[#8f8ea6]" />
          </div>
          <div className="mt-auto"><ScrollArrow /></div>
        </div>
      </div>
    </div>
  </div>
);

/* ---------- file chooser ---------- */

const MonitorShape = () => (
  <g>
    <ellipse cx="12" cy="28" rx="9" ry="3.300" fill="url(#steel)" stroke="#7c7ea8" />
    <path d="M9 21h6l1 6H9z" fill="#a9abcf" />
    <path d="M1 4l18-3 3 19-17 3z" fill="url(#steel)" stroke="#6d6fa0" />
    <path d="M4 6.500L17.500 4l2 13.500L7 20z" fill="url(#screen)" />
  </g>
);

const PlaceIcon = ({ kind }) => (
  <svg width="32" height="32" viewBox="0 0 32 32" className="shrink-0">
    {kind === 'recent' && (
      <g>
        <path d="M.5 1.500h17l4 4v25H.5z" fill="url(#paper)" stroke="#5b86cc" />
        <path d="M17.500 1.500v4h4" fill="#fff" stroke="#5b86cc" />
        <path d="M3 9h12M3 12h8M3 15h6M3 18h5M3 21h5" stroke="#8fb4e8" />
        <circle cx="20" cy="20.500" r="9.500" fill="#eef6fd" stroke="#8d979f" strokeWidth="2" />
        <circle cx="20" cy="20.500" r="7.500" fill="#d5ecfb" />
        <path d="M20 20.500l4.500-4M19 21l-3.500-1M20 21h4" stroke="#222" strokeWidth="1.600" />
        <path d="M20 13v1.500M20 26.500V28M12.500 20.500H14M26 20.500h1.500" stroke="#f06a3a" strokeWidth="1.500" />
      </g>
    )}
    {kind === 'desktop' && (
      <g>
        <path d="M.5 4.500L28 1.500l1 26L2 30.500z" fill="#1f6cd0" stroke="#1a4fa0" />
        <path d="M4 9l6-3.500 13-1L27 9v14l-4 3.500-14 1.500L4.500 24z" fill="#fff3c8" />
        <path d="M9.500 9.500l11-1.500v14l-11 3z" fill="#d4ecff" stroke="#2f7bd0" />
        <path d="M14 15l2 3 4-1" fill="none" stroke="#2f7bd0" />
        <path d="M15.500 17.500l3-4 9-3.500 1 3-9 4z" fill="#5b93de" stroke="#24539c" strokeWidth=".8" />
        <path d="M27.500 9.500l3-1v4l-2 1z" fill="#e0402a" />
      </g>
    )}
    {kind === 'docs' && (
      <g>
        <path d="M2.500 29V9h8l3 3h13v6z" fill="#f7cf5c" stroke="#c4922a" />
        <path d="M8 12L16 1l12 11-8 14-11-6z" fill="#cfe6fb" stroke="#7ba6dc" />
        <path d="M13 12l4-6 6 6M14 15l8 4" fill="none" stroke="#a4cbf2" strokeWidth="2" />
        <path d="M3 30.500l5-13 10 2 11-5-4 13-20 3.500z" fill="url(#gold)" stroke="#c4922a" />
      </g>
    )}
    {kind === 'computer' && (
      <g>
        <path d="M17 6l6-3 9 2v19l-8 2-7-3z" fill="url(#steel)" stroke="#6d6fa0" />
        <path d="M25 8v17M26 10l5-1M26 13l5-1M26 16l5-1" stroke="#6d6fa0" />
        <MonitorShape />
      </g>
    )}
    {kind === 'network' && (
      <g>
        <circle cx="10.500" cy="11" r="10.500" fill="url(#blue)" />
        <path d="M2 7C5 1 12 0 15 2l-3 6-5 1-1 5-4-2zM6 16l6-1 2 6-5 1z" fill="#3fb53a" />
        <g transform="translate(10 1)"><MonitorShape /></g>
      </g>
    )}
  </svg>
);

const places = [
  { kind: 'recent', name: 'Documentos recentes' },
  { kind: 'desktop', name: 'Desktop' },
  { kind: 'docs', name: 'Meus documentos' },
  { kind: 'computer', name: 'Meu computador', active: true },
  { kind: 'network', name: 'Meus locais de rede' },
];

const FloppyDrive = () => (
  <svg width="16" height="16" viewBox="0 0 16 16" className="shrink-0">
    <path d="M1 10l5-2 9 2v3l-6 2-8-2z" fill="#c9c9cf" stroke="#6b6b72" />
    <path d="M4 1h8v9l-3 1-5-1z" fill="#4a4ca4" />
    <path d="M6.500 1h3v3.500h-3zM6 7h4v3H6z" fill="#e8e8f8" />
    <path d="M4 12l6 1.500" stroke="#333" />
  </svg>
);
const HardDrive = () => (
  <svg width="16" height="16" viewBox="0 0 16 16" className="shrink-0">
    <path d="M.5 7l6-3 9 2v3l-6 3-9-3z" fill="#b9b9bf" stroke="#7c7c84" />
    <path d="M1 7l8 2L15 6" fill="none" stroke="#eee" />
    <circle cx="12" cy="9" r="1" fill="#444" />
  </svg>
);
const DiscDrive = () => (
  <svg width="16" height="16" viewBox="0 0 16 16" className="shrink-0">
    <path d="M1 10l5-2 9 2v3l-6 2-8-2z" fill="#c9c9cf" stroke="#6b6b72" />
    <circle cx="8" cy="6" r="5.500" fill="#dcdcf4" stroke="#8e8eb0" />
    <circle cx="8" cy="6" r="1.500" fill="#fff" stroke="#8e8eb0" />
  </svg>
);

const files = [
  { icon: FloppyDrive, name: 'Disquete de 3½ (A:)' },
  { icon: HardDrive, name: 'Disco local (C:)' },
  { icon: DiscDrive, name: 'Unidade de DVD-RAM (D:)' },
  { icon: Folder, name: 'Documentos compartilhados' },
  { icon: Folder, name: 'ines - documentos' },
];

const sunken = 'border-2 border-t-[#9d9ca2] border-l-[#9d9ca2] border-r-[#f4f2e8] border-b-[#f4f2e8] bg-white';

const ClassicArrow = () => (
  <span className="pointer-events-none flex h-full w-4 shrink-0 items-center justify-center border border-t-white border-r-[#77767c] border-b-[#77767c] border-l-white bg-[#e0dfe3]">
    <Caret />
  </span>
);

const classicButton = 'w-[76px] border border-t-white border-l-white border-r-[#77767c] border-b-[#77767c] bg-[#e0dfe3] shadow-[inset_-1px_-1px_0_#aaa9b0]';

const FileDialog = () => (
  <div role="dialog" aria-labelledby="dialog-title" className="absolute top-[162px] left-[602px] flex h-[419px] w-[563px] flex-col rounded-t-lg border border-[#6a6a88] bg-[#c9c8d6] p-0.5 font-['Roboto',sans-serif] text-[11px] text-black">
    <div className="flex h-[26px] shrink-0 items-center rounded-t-md bg-gradient-to-b from-[#a5a4c0] via-[#cdccdc] to-white pr-[3px] pl-[5px]">
      <h2 id="dialog-title" className="grow pt-1 font-['Open_Sans',sans-serif] text-xs font-bold">Escolher arquivo</h2>
      <div className="flex gap-0.5">
        <button type="button" aria-label="Ajuda" className="flex size-[21px] items-center justify-center rounded-[3px] border border-[#6f6f96] bg-gradient-to-b from-white to-[#b9b8cf] font-['Liberation_Sans',sans-serif] text-base leading-4 font-bold text-[#44445c]">?</button>
        <button type="button" aria-label="Fechar" className="flex size-[21px] items-center justify-center rounded-[3px] border border-[#8c2430] bg-gradient-to-b from-[#f0a08c] to-[#c43c44]">
          <svg width="13" height="13" viewBox="0 0 13 13"><path d="M1.500 1.500l10 10M11.500 1.500l-10 10" stroke="#fff" strokeWidth="2.500" /></svg>
        </button>
      </div>
    </div>
    <div className="flex min-h-0 grow flex-col border border-[#6a6a88] bg-[#e0dfe3] pt-0.5 pr-1.5 pl-1.5">
      <div className="flex h-[22px] shrink-0 items-center">
        <label htmlFor="look-in" className="w-[86px] pt-0.5 text-right">Examinar:</label>
        <div className={`ml-[7px] flex h-[22px] w-[260px] items-center ${sunken}`}>
          <svg width="14" height="16" viewBox="0 0 24 32" className="mr-[3px] ml-1.5"><MonitorShape /></svg>
          <div className="grow">
            <select id="look-in" className="h-[15px] w-[86px] appearance-none border border-dotted border-black bg-[#b2b4bf] leading-3 outline-none">
              <option>Meu computador</option>
            </select>
          </div>
          <ClassicArrow />
        </div>
        <div className="flex items-center gap-[7px] pt-1 pl-[18px]">
          <button type="button" aria-label="Voltar">
            <svg width="14" height="12" viewBox="0 0 14 12"><path d="M.8 6L5.500 1.500v3h7v3h-7v3z" fill="#0ff" stroke="#000" /></svg>
          </button>
          <button type="button" aria-label="Um nível acima">
            <svg width="16" height="14" viewBox="0 0 16 14">
              <path d="M.5 3.500l2-2h4l1.500 2h7v9H.5z" fill="#fdfd3c" stroke="#000" />
              <path d="M6 5v5h5M4 7l2-2.500L8 7" fill="none" stroke="#000" />
            </svg>
          </button>
          <button type="button" aria-label="Nova pasta">
            <svg width="16" height="15" viewBox="0 0 16 15">
              <path d="M.5 5.500l1-1h4l1 1h5v8H.5z" fill="#b4b4b4" stroke="#9a9a9e" strokeDasharray="1 1" />
              <path d="M12 0v9M8 4.500h8M9 1.500l6 6M15 1.500l-6 6" stroke="#aaa" strokeDasharray="1 1" />
            </svg>
          </button>
          <button type="button" aria-label="Exibir" className="flex items-center gap-0.5">
            <svg width="16" height="14" viewBox="0 0 16 14" shapeRendering="crispEdges">
              <path d="M.5.5h15v13H.5z" fill="#fff" stroke="#000" />
              <path d="M1 2h14" stroke="#777" strokeWidth="2" />
              <path d="M3 5h2M3 8h2M3 11h2M9 5h2M9 8h2M9 11h2" stroke="#00008b" strokeWidth="2" />
              <path d="M6 5.500h2M6 8.500h2M6 11.500h2M12 5.500h2M12 8.500h2M12 11.500h2" stroke="#000" />
            </svg>
            <svg width="5" height="3" viewBox="0 0 5 3"><path d="M0 0h5L2.500 3z" /></svg>
          </button>
        </div>
      </div>
      <div className="mt-1 flex min-h-0 grow gap-1.5">
        <div className="flex w-[87px] shrink-0 flex-col">
          {places.map(({ kind, name, active }) => (
            <button
              key={kind}
              type="button"
              className={`flex h-[65px] flex-col items-center gap-0.5 border pt-0.5 leading-[13px] ${
                active ? 'border-t-[#8f8e94] border-l-[#8f8e94] border-r-white border-b-white bg-[#efeff1]' : 'border-transparent'
              }`}
            >
              <PlaceIcon kind={kind} />
              <span className={active ? 'whitespace-nowrap' : 'px-1'}>{name}</span>
            </button>
          ))}
        </div>
        <div className="flex min-w-0 grow flex-col">
          <ul className="h-[294px] shrink-0 border border-[#7f9db9] bg-white pt-0.5 pl-px">
            {files.map(({ icon: Icon, name }) => (
              <li key={name} className="flex h-[17px] items-center gap-px">
                <Icon />
                {name}
              </li>
            ))}
          </ul>
          <div className="mt-1.5 flex h-[23px] items-center justify-between">
            <label htmlFor="file-name" className="w-[96px] pt-0.5 pl-0.5">Nome do arquivo:</label>
            <div className={`mr-4 flex h-[22px] grow ${sunken}`}>
              <input id="file-name" className="w-10 grow px-0.5 outline-none" />
              <ClassicArrow />
            </div>
            <button type="button" className={`${classicButton} h-[23px] outline outline-black -outline-offset-1`}>Abrir</button>
          </div>
          <div className="mt-1 flex h-[23px] items-center justify-between">
            <label htmlFor="file-type" className="w-[96px] pt-0.5 pl-0.5">Arquivos do tipo:</label>
            <div className={`mr-4 flex h-[22px] grow items-center ${sunken}`}>
              <select id="file-type" className="h-full w-10 grow appearance-none px-0.5 outline-none">
                <option>Todos os arquivos (*.*)</option>
              </select>
              <ClassicArrow />
            </div>
            <button type="button" className={`${classicButton} h-[23px]`}>Cancelar</button>
          </div>
        </div>
      </div>
    </div>
    <svg width="12" height="12" viewBox="0 0 12 12" className="absolute right-[3px] bottom-[3px]">
      <path d="M1 12L12 1M5 12l7-7M9 12l3-3" stroke="#8e8d94" strokeWidth="1.500" />
    </svg>
  </div>
);

/* ---------- taskbar ---------- */

const tasks = [
  { icon: WordPage, name: 'Tutorial_Moodle MOD...' },
  { icon: WordPage, name: 'Tutorial_Moodle-Alun...' },
  { icon: WordPage, name: 'Documento3 - Micros...' },
  { icon: IePage, name: 'Mídias CI - TCC - Ines...', active: true },
];

const Taskbar = () => (
  <div className="flex h-[30px] shrink-0 items-stretch border-t border-[#77779a] bg-gradient-to-b from-[#f4f4f8] via-[#a9aabf] via-25% to-[#e3e3ea] font-['DejaVu_Sans_Condensed','DejaVu_Sans',sans-serif] text-[11px]">
    <button type="button" className="flex w-[111px] items-center gap-1 rounded-r-2xl bg-gradient-to-b from-[#2c8a2c] via-[#5cb656] via-25% to-[#2a8c2c] pl-2.5 font-['Open_Sans',sans-serif] text-lg leading-6 font-bold text-white italic [text-shadow:1px_1px_2px_#1a4a1a]">
      <Flag />
      Iniciar
    </button>
    <div className="flex grow items-center gap-0.5 pl-2.5">
      {tasks.map(({ icon: Icon, name, active }) => (
        <button
          key={name}
          type="button"
          className={`flex h-[25px] w-[158px] items-center gap-1 rounded-xs border px-[7px] whitespace-nowrap ${
            active ? 'border-[#4c5866] bg-[#76808d] text-white' : 'border-[#8686a0] bg-gradient-to-b from-white to-[#c6c5d6] text-[#333]'
          }`}
        >
          <Icon />
          {name}
        </button>
      ))}
    </div>
    <span className="mr-[18px] self-center bg-[#b6b6c4] px-0.5 leading-4">PT</span>
    <div className="flex items-center gap-1 border-l border-[#77779a] bg-gradient-to-b from-white to-[#c9c8d8] pr-3">
      <button type="button" aria-label="Mostrar ícones" className="-mr-0.5 -ml-2.5">
        <svg width="19" height="19" viewBox="0 0 19 19">
          <circle cx="9.500" cy="9.500" r="8.800" fill="url(#steel)" stroke="#55557c" />
          <path d="M11.500 5l-4.500 4.500 4.500 4.500" fill="none" stroke="#fff" strokeWidth="2.200" />
        </svg>
      </button>
      <svg width="15" height="16" viewBox="0 0 15 16">
        <path d="M5 1h9v8H5z" fill="#7cd4fb" stroke="#3a62b0" />
        <path d="M1 6h9v7H1z" fill="#49a8f2" stroke="#3a62b0" />
        <path d="M3 15h6" stroke="#6a6a8c" strokeWidth="2" />
      </svg>
      <svg width="14" height="14" viewBox="0 0 14 14" className="mr-1" shapeRendering="crispEdges">
        <path d="M0 0h7v7H0z" fill="#f7d800" />
        <path d="M7 0h7v7H7z" fill="#000" />
        <path d="M0 7h7v7H0z" fill="#008a00" />
        <path d="M7 7h7v7H7z" fill="#f00" />
      </svg>
      <time>14:56</time>
    </div>
  </div>
);

const App = () => (
  <div className="flex h-screen flex-col overflow-hidden">
    <Defs />
    <div className="relative grow">
      <WordWindow />
      <OfficeOrb />
      <BrowserWindow />
      <FileDialog />
    </div>
    <Taskbar />
  </div>
);

export default App;
